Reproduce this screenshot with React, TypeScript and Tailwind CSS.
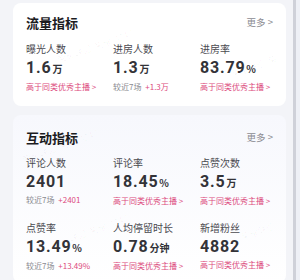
import React from 'react';

type Metric = {
  label: string;
  value: string;
  unit?: string;
  sub: 'better' | { text: string; delta: string };
};

const traffic: Metric[] = [
  { label: '曝光人数', value: '1.6', unit: '万', sub: 'better' },
  { label: '进房人数', value: '1.3', unit: '万', sub: { text: '较近7场', delta: '+1.3万' } },
  { label: '进房率', value: '83.79', unit: '%', sub: 'better' },
];

const interaction: Metric[] = [
  { label: '评论人数', value: '2401', sub: { text: '较近7场', delta: '+2401' } },
  { label: '评论率', value: '18.45', unit: '%', sub: 'better' },
  { label: '点赞次数', value: '3.5', unit: '万', sub: 'better' },
  { label: '点赞率', value: '13.49', unit: '%', sub: { text: '较近7场', delta: '+13.49%' } },
  { label: '人均停留时长', value: '0.78', unit: '分钟', sub: 'better' },
  { label: '新增粉丝', value: '4882', sub: 'better' },
];

const cjk = "font-['Noto_Sans_CJK_SC','Noto_Sans',sans-serif]";

const MetricCell: React.FC<{ m: Metric }> = ({ m }) => (
  <div className="flex flex-col">
    <div className="text-[10px] leading-[14px] text-[#4a4a50]">{m.label}</div>
    <div className="leading-[20px] text-[#333338] whitespace-nowrap">
      <span className="font-['Roboto',sans-serif] font-bold text-[16px] tracking-[0.8px]">{m.value}</span>
      {m.unit && <span className="text-[10px] font-bold ml-[1px]">{m.unit}</span>}
    </div>
    <div className="mt-[1px] text-[8px] leading-[14px] whitespace-nowrap">
      {m.sub === 'better' ? (
        <span className="text-[#dc4a7d]">高于同类优秀主播 <span className="text-[8px]">&gt;</span></span>
      ) : (
        <span className="text-[#8a8a90]">
          {m.sub.text} <span className="text-[#dc4a7d] ml-[2px]">{m.sub.delta}</span>
        </span>
      )}
    </div>
  </div>
);

const Header: React.FC<{ title: string }> = ({ title }) => (
  <div className="flex items-center justify-between">
    <div className="text-[13px] leading-[18px] font-bold text-[#1c1c1f]">{title}</div>
    <div className="text-[9.5px] leading-[14px] text-[#8c8c92] -mt-[3px]">更多 &gt;</div>
  </div>
);

export default function App() {
  return (
    <div className={`${cjk} w-[300px] h-[280px] overflow-hidden bg-[#f3f4f8] flex relative`}>
      <div className="w-[293px] flex flex-col pl-[13px] pr-[7px] pt-[3px]">
        <div className="bg-white rounded-[8px] pl-[13px] pr-[13px] pt-[11px] pb-[12px]">
          <Header title="流量指标" />
          <div className="grid grid-cols-[87px_87px_1fr] mt-[10px]">
            {traffic.map((m) => (
              <MetricCell key={m.label} m={m} />
            ))}
          </div>
        </div>
        <div className="mt-[9px] bg-gradient-to-b from-[#f7f8fd] to-white rounded-[8px] pl-[13px] pr-[13px] pt-[14px] pb-[10px]">
          <Header title="互动指标" />
          <div className="grid grid-cols-[87px_87px_1fr] gap-y-[13px] mt-[9px]">
            {interaction.map((m) => (
              <MetricCell key={m.label} m={m} />
            ))}
          </div>
        </div>
      </div>
      <div className="w-[3px] bg-[#cfd1d9]" />
      <div className="flex-1 bg-[#eef0f6]" />
      <div className="pointer-events-none absolute inset-0 text-[9px] text-black/[0.04] whitespace-nowrap">
        <div className="absolute left-[55px] top-[40px] -rotate-[20deg]">荣耀联盟-荣耀-3347</div>
        <div className="absolute left-[20px] top-[140px] -rotate-[20deg]">荣耀联盟-荣耀-3347</div>
        <div className="absolute left-[50px] top-[225px] -rotate-[20deg]">荣耀联盟-荣耀-3347</div>
        <div className="absolute left-[230px] top-[60px] -rotate-[20deg]">荣耀联盟-荣</div>
        <div className="absolute left-[240px] top-[225px] -rotate-[20deg]">荣耀联盟</div>
      </div>
    </div>
  );
}
